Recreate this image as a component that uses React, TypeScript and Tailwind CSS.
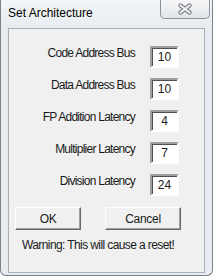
import React from "react";

const rows: [string, string][] = [
  ["Code Address Bus", "10"],
  ["Data Address Bus", "10"],
  ["FP Addition Latency", "4"],
  ["Multiplier Latency", "7"],
  ["Division Latency", "24"],
];

export default function App() {
  return (
    <div className="relative w-[213px] h-[276px] overflow-hidden bg-[#e8ecf0] border-l border-r border-b border-[#7a8289] rounded-b-[6px] font-['Liberation_Sans',Arial,sans-serif] text-black">
      <div className="h-[28px] flex items-center pl-[7px] pb-[2px] text-[12px] leading-[14px] bg-gradient-to-b from-[#f3f5f8] to-[#e8ecf0]">
        Set Architecture
      </div>
      <div className="absolute top-0 right-[2px] w-[50px] h-[19px] border border-t-0 border-[#8b929a] rounded-b-[5px] bg-gradient-to-b from-[#f6f7f8] to-[#e2e5e9] flex items-center justify-center">
        <svg width="16" height="12" viewBox="0 0 16 12">
          <path d="M3.5 2.5 L12.5 9.5 M12.5 2.5 L3.5 9.5" stroke="#7a7d82" strokeWidth="4.2" strokeLinecap="round" />
          <path d="M3.5 2.5 L12.5 9.5 M12.5 2.5 L3.5 9.5" stroke="#f4f4f4" strokeWidth="2.2" strokeLinecap="round" />
        </svg>
      </div>
      <div className="mx-[7px] h-[245px] border border-[#aab0b6] bg-[#f0f0f0] flex flex-col text-[12px] leading-[14px] tracking-[-0.6px] text-[#1a1a1a]">
        <div className="pt-[17px] flex flex-col gap-[10px]">
          {rows.map(([label, value]) => (
            <div key={label} className="flex items-start">
              <div className="w-[126px] text-right tracking-[-0.75px]">{label}</div>
              <div className="ml-[15px] w-[29px] h-[22px] border-2 border-t-[#a0a0a0] border-l-[#a0a0a0] border-b-white border-r-white bg-white shadow-[inset_1px_1px_0_#505050] flex items-center justify-center tracking-normal">
                {value}
              </div>
            </div>
          ))}
        </div>
        <div className="mt-[11px] flex pl-[6px] gap-[24px]">
          <button className="w-[66px] h-[23px] border border-t-white border-l-white border-b-[#696969] border-r-[#696969] shadow-[inset_-1px_-1px_0_#a0a0a0] bg-[#f0f0f0] flex items-center justify-center tracking-[-0.3px]">
            OK
          </button>
          <button className="w-[76px] h-[23px] border border-t-white border-l-white border-b-[#696969] border-r-[#696969] shadow-[inset_-1px_-1px_0_#a0a0a0] bg-[#f0f0f0] flex items-center justify-center tracking-[-0.3px]">
            Cancel
          </button>
        </div>
        <div className="mt-[8px] pl-[13px]">Warning: This will cause a reset!</div>
      </div>
    </div>
  );
}
